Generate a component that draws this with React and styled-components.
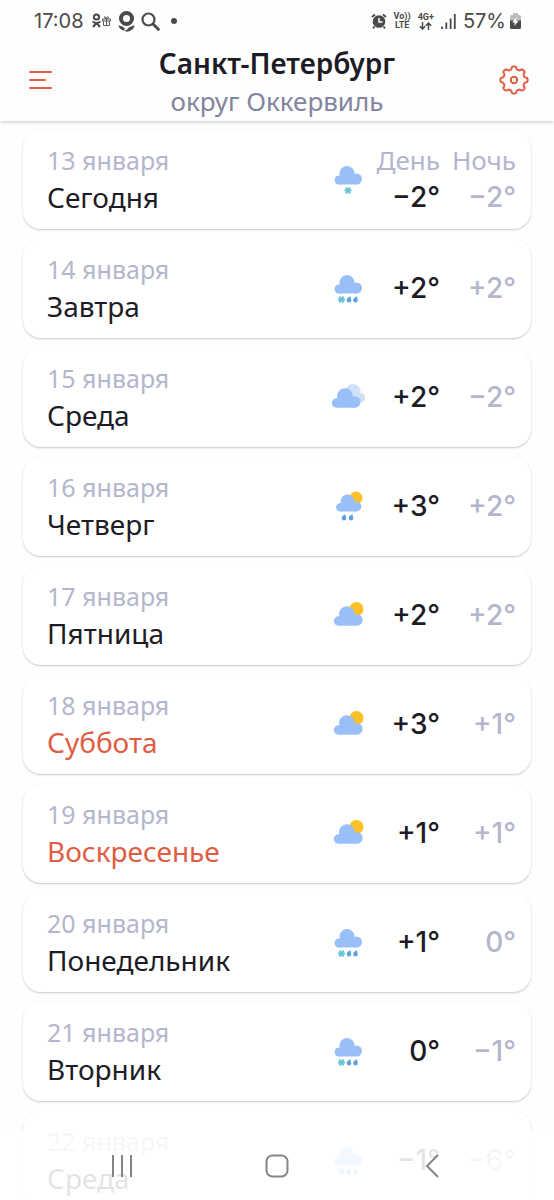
import React from 'react'
import styled, { createGlobalStyle } from 'styled-components'

const GlobalStyle = createGlobalStyle`
  * {
    box-sizing: border-box;
  }

  body {
    margin: 0;
    background: #fefefe;
    color: #1d1c26;
    font-family: 'Noto Sans', 'Open Sans', sans-serif;
  }

  button {
    display: flex;
    align-items: center;
    justify-content: center;
    padding: 0;
    border: 0;
    background: none;
    cursor: pointer;
  }

  svg {
    display: block;
    flex: none;
  }
`

const Screen = styled.div`
  display: flex;
  flex-direction: column;
  height: 100vh;
  overflow: hidden;
`

const TopArea = styled.div`
  flex: none;
  background: #fefefe;
  box-shadow: 0 1px 4px rgba(0, 0, 0, 0.22);
`

const StatusBar = styled.div`
  display: flex;
  align-items: center;
  justify-content: space-between;
  height: 42px;
  padding: 0 33px 0 34px;
  color: #4a4a4a;
  font-family: Inter, Roboto, sans-serif;
  font-size: 20px;
`

const StatusGroup = styled.div`
  display: flex;
  align-items: center;
  gap: ${(props) => props.$gap}px;
`

const Network = styled.span`
  font-family: Roboto, sans-serif;
  font-size: 9px;
  font-weight: 700;
  line-height: 9px;
  text-align: center;
`

const Dot = styled.span`
  width: 6px;
  height: 6px;
  margin-left: 5px;
  border-radius: 50%;
  background: #4a4a4a;
`

const Header = styled.header`
  display: flex;
  align-items: center;
  justify-content: space-between;
  height: 79px;
  padding: 0 24px;
`

const IconButton = styled.button`
  align-self: flex-start;
  width: 32px;
  height: 76px;
  color: #e05c43;
`

const Place = styled.div`
  text-align: center;
`

const City = styled.h1`
  margin: 0;
  font-size: 28px;
  font-weight: 600;
  line-height: 38px;
`

const District = styled.p`
  margin: 0;
  color: #83859e;
  font-size: 26px;
  line-height: 38px;
`

const Days = styled.ul`
  display: flex;
  flex: 1;
  flex-direction: column;
  gap: 10px;
  margin: 0;
  padding: 9px 23px 0;
  overflow-y: auto;
  list-style: none;
  scrollbar-width: none;
`

const Card = styled.li`
  display: flex;
  flex: none;
  align-items: center;
  height: 99px;
  padding: 0 15px 2px 24px;
  border-radius: 18px;
  background: #ffffff;
  box-shadow: 0 1px 2px rgba(0, 0, 0, 0.22);
`

const DayInfo = styled.div`
  flex: 1;
`

const DateText = styled.div`
  color: #b3b6cc;
  font-size: 25px;
  line-height: 36px;
`

const DayName = styled.div`
  color: ${(props) => (props.$weekend ? '#e05c43' : '#1d1c26')};
  font-size: 28px;
  line-height: 38px;
`

const Temperatures = styled.div`
  display: grid;
  grid-template-columns: 73px 76px;
  text-align: right;
`

const Caption = styled.span`
  color: #b3b6cc;
  font-size: 26px;
  line-height: 36px;
`

const Temp = styled.span`
  color: ${(props) => (props.$night ? '#b3b6cc' : '#1d1c26')};
  font-family: Inter, 'Noto Sans', sans-serif;
  font-size: 28px;
  font-weight: 500;
  line-height: 38px;
`

const NavBar = styled.nav`
  position: fixed;
  right: 0;
  bottom: 0;
  left: 0;
  display: flex;
  justify-content: center;
  gap: 107px;
  height: 68px;
  background: rgba(255, 255, 255, 0.88);
`

const NavButton = styled.button`
  width: 48px;
  color: #858585;
`

const Cloud = ({ transform }) => (
  <g transform={transform} fill="#99bff8">
    <circle cx="18" cy="13.5" r="7.5" />
    <circle cx="27.500" cy="19" r="5.500" />
    <circle cx="10" cy="20" r="4.500" />
    <path d="M10 15.500h17.500v9H10z" />
  </g>
)

const Snowflake = ({ x }) => (
  <path
    d={`M${x - 3.5} 30.5h7M${x - 2} 27.500l4 6M${x + 2} 27.500l-4 6`}
    stroke="#63c4d6"
    strokeWidth="2"
  />
)

const Drop = ({ x }) => (
  <path
    d={`M${x + 1.5} 27.300c-2.500 1-3.800 2.300-3.800 4a2.300 2.300 0 0 0 4.600 0c0-1.300-.8-2.300-.8-4z`}
    fill="#5da3dc"
  />
)

const Sun = ({ cx, cy, r }) => <circle cx={cx} cy={cy} r={r} fill="#fcc028" />

const WeatherIcon = ({ type }) => (
  <svg width="38" height="38" viewBox="0 0 38 38" fill="none" aria-hidden="true">
    {type === 'snow' && (
      <>
        <Cloud />
        <Snowflake x={19} />
      </>
    )}
    {type === 'sleet' && (
      <>
        <Cloud />
        <Snowflake x={12.5} />
        <Drop x={20} />
        <Drop x={26.5} />
      </>
    )}
    {type === 'cloudy' && (
      <>
        <g fill="#cfe0f7">
          <circle cx="24" cy="13.500" r="7.500" />
          <circle cx="31.500" cy="19.700" r="4.700" />
        </g>
        <Cloud transform="translate(-3 4) scale(1.05)" />
      </>
    )}
    {type === 'rain' && (
      <>
        <Sun cx={27} cy={11} r={6.5} />
        <Cloud transform="translate(2 2) scale(0.92)" />
        <Drop x={15} />
        <Drop x={22} />
      </>
    )}
    {type === 'partly' && (
      <>
        <Sun cx={27.5} cy={13} r={7} />
        <Cloud transform="translate(-1 4) scale(1.05)" />
      </>
    )}
  </svg>
)

const OkIcon = () => (
  <svg width="11" height="16" viewBox="0 0 11 16" fill="none" stroke="#4a4a4a" strokeWidth="2">
    <circle cx="5.500" cy="4" r="2.600" />
    <path d="M1.500 8.500q4 3 8 0M5.500 10l-3.500 4M5.500 10l3.500 4" />
  </svg>
)

const GiftIcon = () => (
  <svg width="9" height="10" viewBox="0 0 9 10" fill="none" stroke="#5a5a5a">
    <path d="M.5 3h8v2h-8zM1.500 5v4.500h6V5M4.500 3v6.500M4.500 2.500C2 2.500 2 .5 3 .7s1.500 1.800 1.500 1.800S5 .5 6 .7s1 1.800-1.500 1.800" />
  </svg>
)

const OkBigIcon = () => (
  <svg width="17" height="21" viewBox="0 0 17 21" fill="none">
    <circle cx="8.500" cy="7.500" r="5.500" stroke="#4a4a4a" strokeWidth="4" />
    <path d="M.3 14.500c2 0 4.700 1.200 6.700 3.200l-1.200 2C3 18.700 1 17 .3 14.500zM16.700 14.500c-2.500 0-6 1.700-8.200 4.500v1.700c4.200-.2 7.200-2.700 8.200-6.200zM6.500 19.500l2 1.300V19z" fill="#4a4a4a" />
  </svg>
)

const SearchIcon = () => (
  <svg width="19" height="19" viewBox="0 0 19 19" fill="none" stroke="#4a4a4a" strokeLinecap="round">
    <circle cx="7.500" cy="7.500" r="6" strokeWidth="2.200" />
    <path d="M12.300 12.300l5 5" strokeWidth="3" />
  </svg>
)

const AlarmIcon = () => (
  <svg width="16" height="16" viewBox="0 0 16 16" fill="none">
    <circle cx="8" cy="8.500" r="6.300" fill="#4a4a4a" />
    <path d="M1 4l3-2.500M15 4l-3-2.500M3.500 13.500L2 15.300M12.500 13.500l1.500 1.800" stroke="#4a4a4a" strokeWidth="1.800" />
    <path d="M8 5v4h3.500" stroke="#fff" strokeWidth="1.500" />
  </svg>
)

const ArrowsIcon = () => (
  <svg width="15" height="8" viewBox="-1 0 15 8" fill="none" stroke="#4a4a4a" strokeWidth="1.500">
    <path d="M3.500 0v7M.8 4.300l2.700 2.700 2.700-2.700M9.500 8V1M6.800 3.700L9.500 1l2.700 2.700" />
  </svg>
)

const SignalIcon = () => (
  <svg width="15" height="15" viewBox="0 0 15 15" stroke="#4a4a4a" strokeWidth="1.800">
    <path d="M1 12.500V15M5.300 8.500V15M9.600 4.500V15M13.800 0v15" />
  </svg>
)

const BatteryIcon = () => (
  <svg width="11" height="16" viewBox="0 0 11 16">
    <path d="M3 0h5v2h1.500a1.500 1.500 0 0 1 1.500 1.500V8H0V3.500A1.500 1.500 0 0 1 1.500 2H3z" fill="#bcbcbc" />
    <path d="M0 7.500h11v7a1.500 1.500 0 0 1-1.500 1.500h-8A1.500 1.500 0 0 1 0 14.500z" fill="#4a4a4a" />
    <path d="M6.500 4L2.300 9.500h2.500L4.300 13l4.400-5.300H6z" fill="#fff" />
  </svg>
)

const MenuIcon = () => (
  <svg width="24" height="20" viewBox="0 0 24 20" fill="none" stroke="currentColor" strokeWidth="2" strokeLinecap="round">
    <path d="M2 2h21M2 10h15M2 18h21" />
  </svg>
)

// smooth outline of a cog with eight teeth
const gearPath = () => {
  const points = []
  for (let i = 0; i < 160; i++) {
    const angle = (i * Math.PI) / 80
    const radius = 12.2 + 1.4 * Math.tanh(2.5 * Math.cos(8 * angle))
    const x = 15 + radius * Math.cos(angle)
    const y = 15 + radius * Math.sin(angle)
    points.push(`${x.toFixed(2)} ${y.toFixed(2)}`)
  }
  return `M${points.join('L')}Z`
}

const GearIcon = () => (
  <svg width="30" height="30" viewBox="0 0 30 30" fill="none" stroke="currentColor" strokeWidth="2" strokeLinejoin="round">
    <path d={gearPath()} />
    <circle cx="15" cy="15" r="3.200" />
  </svg>
)

const RecentsIcon = () => (
  <svg width="22" height="22" viewBox="0 0 22 22" stroke="currentColor" strokeWidth="2">
    <path d="M2 0v22M11 0v22M20 0v22" />
  </svg>
)

const HomeIcon = () => (
  <svg width="24" height="24" viewBox="0 0 24 24" fill="none" stroke="currentColor" strokeWidth="2">
    <rect x="1.500" y="1.500" width="21" height="21" rx="6" />
  </svg>
)

const BackIcon = () => (
  <svg width="14" height="24" viewBox="0 0 14 24" fill="none" stroke="currentColor" strokeWidth="2">
    <path d="M13 1L2 12l11 11" />
  </svg>
)

const forecast = [
  { date: '13 января', name: 'Сегодня', icon: 'snow', day: '−2°', night: '−2°', captions: true },
  { date: '14 января', name: 'Завтра', icon: 'sleet', day: '+2°', night: '+2°' },
  { date: '15 января', name: 'Среда', icon: 'cloudy', day: '+2°', night: '−2°' },
  { date: '16 января', name: 'Четверг', icon: 'rain', day: '+3°', night: '+2°' },
  { date: '17 января', name: 'Пятница', icon: 'partly', day: '+2°', night: '+2°' },
  { date: '18 января', name: 'Суббота', icon: 'partly', day: '+3°', night: '+1°', weekend: true },
  { date: '19 января', name: 'Воскресенье', icon: 'partly', day: '+1°', night: '+1°', weekend: true },
  { date: '20 января', name: 'Понедельник', icon: 'sleet', day: '+1°', night: '0°' },
  { date: '21 января', name: 'Вторник', icon: 'sleet', day: '0°', night: '−1°' },
  { date: '22 января', name: 'Среда', icon: 'sleet', day: '−1°', night: '−6°' },
]

const DayCard = ({ date, name, icon, day, night, weekend, captions }) => (
  <Card>
    <DayInfo>
      <DateText>{date}</DateText>
      <DayName $weekend={weekend}>{name}</DayName>
    </DayInfo>
    <WeatherIcon type={icon} />
    <Temperatures>
      {captions && (
        <>
          <Caption>День</Caption>
          <Caption>Ночь</Caption>
        </>
      )}
      <Temp>{day}</Temp>
      <Temp $night>{night}</Temp>
    </Temperatures>
  </Card>
)

const App = () => (
  <>
    <GlobalStyle />
    <Screen>
      <TopArea>
        <StatusBar>
          <StatusGroup $gap={7}>
            <span>17:08</span>
            <StatusGroup $gap={0}>
              <OkIcon />
              <GiftIcon />
            </StatusGroup>
            <StatusGroup $gap={6}>
              <OkBigIcon />
              <SearchIcon />
              <Dot />
            </StatusGroup>
          </StatusGroup>
          <StatusGroup $gap={7}>
            <AlarmIcon />
            <Network>
              Vo))
              <br />
              LTE
            </Network>
            <Network>
              4G+
              <ArrowsIcon />
            </Network>
            <SignalIcon />
            <StatusGroup $gap={4}>
              <span>57%</span>
              <BatteryIcon />
            </StatusGroup>
          </StatusGroup>
        </StatusBar>
        <Header>
          <IconButton type="button" aria-label="Меню">
            <MenuIcon />
          </IconButton>
          <Place>
            <City>Санкт-Петербург</City>
            <District>округ Оккервиль</District>
          </Place>
          <IconButton type="button" aria-label="Настройки">
            <GearIcon />
          </IconButton>
        </Header>
      </TopArea>
      <Days>
        {forecast.map((item) => (
          <DayCard key={item.date} {...item} />
        ))}
      </Days>
    </Screen>
    <NavBar>
      <NavButton type="button" aria-label="Последние">
        <RecentsIcon />
      </NavButton>
      <NavButton type="button" aria-label="Домой">
        <HomeIcon />
      </NavButton>
      <NavButton type="button" aria-label="Назад">
        <BackIcon />
      </NavButton>
    </NavBar>
  </>
)

export default App
